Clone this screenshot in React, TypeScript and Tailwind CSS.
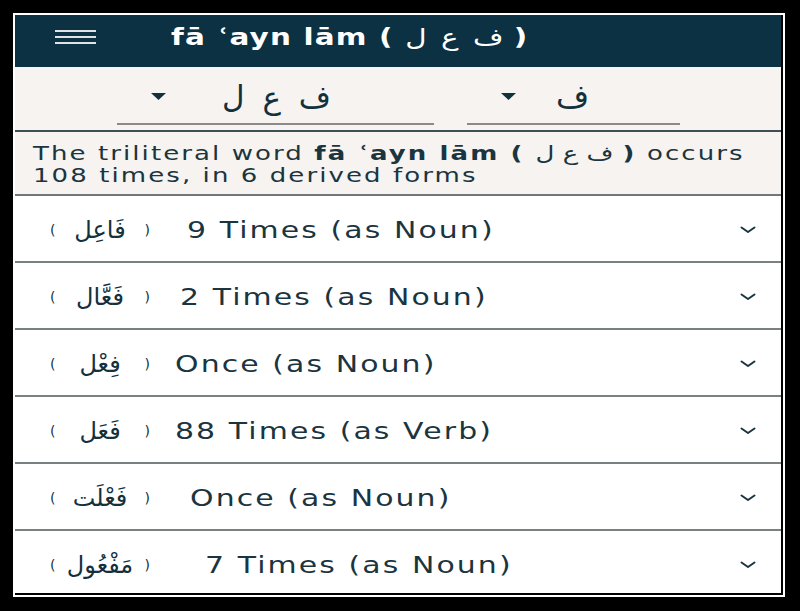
const forms = [
  { ar: "فَاعِل", label: "9 Times (as Noun)", gap: "ml-[37px]" },
  { ar: "فَعَّال", label: "2 Times (as Noun)", gap: "ml-[30px]" },
  { ar: "فِعْل", label: "Once (as Noun)", gap: "ml-[25px]" },
  { ar: "فَعَل", label: "88 Times (as Verb)", gap: "ml-[25px]" },
  { ar: "فَعْلَت", label: "Once (as Noun)", gap: "ml-[40px]" },
  { ar: "مَفْعُول", label: "7 Times (as Noun)", gap: "ml-[55px]" },
];

const arabic = { fontFamily: "'DejaVu Sans', sans-serif" };

function Caret() {
  return (
    <svg width="15" height="8" viewBox="0 0 15 8" className="shrink-0">
      <path d="M0 0 L15 0 L7.5 7 Z" fill="#13303d" />
    </svg>
  );
}

function Chevron() {
  return (
    <svg width="16" height="8" viewBox="0 0 16 8" className="ml-auto shrink-0">
      <path d="M1.5 1.5 L8 6 L14.5 1.5" fill="none" stroke="#1b3540" strokeWidth="2" strokeLinecap="round" strokeLinejoin="round" />
    </svg>
  );
}

export default function App() {
  return (
    <div className="w-[800px] h-[611px] bg-black pl-[13px] pt-[13px]" style={{ fontFamily: "'DejaVu Sans', sans-serif" }}>
      <div className="w-[772px] h-[584px] border-2 border-white">
        <div className="w-[766px] h-[578px] overflow-hidden bg-white flex flex-col text-[#1b3540]">
          <header className="h-[52px] shrink-0 bg-[#0c3142] flex items-center pb-[8px]">
            <div className="ml-[40px] flex flex-col gap-[4px] w-[41px]">
              <span className="h-[2px] bg-[#dfe3e5]" />
              <span className="h-[2px] bg-[#dfe3e5]" />
              <span className="h-[2px] bg-[#dfe3e5]" />
            </div>
            <h1 className="ml-[75px] text-white text-[23px] font-bold tracking-[0.04em] whitespace-nowrap scale-x-[1.28] origin-left">
              fā ʿayn lām ( <span dir="rtl" className="font-normal tracking-normal [word-spacing:4px]" style={arabic}>ف ع ل</span> )
            </h1>
          </header>

          <div className="h-[65px] shrink-0 bg-[#f6f3f1] border-b-2 border-[#3d4f57] flex items-end pb-[5px]">
            <div className="ml-[102px] w-[317px] h-[50px] border-b-2 border-[#8a8a8a] flex items-center pb-[4px]">
              <span className="ml-[34px]"><Caret /></span>
              <span dir="rtl" className="ml-[56px] text-[31px] leading-none [word-spacing:8px] text-[#13303d]" style={arabic}>ف ع ل</span>
            </div>
            <div className="ml-[33px] w-[213px] h-[50px] border-b-2 border-[#8a8a8a] flex items-center pb-[4px]">
              <span className="ml-[34px]"><Caret /></span>
              <span dir="rtl" className="ml-[40px] text-[32px] leading-none text-[#13303d]" style={arabic}>ف</span>
            </div>
          </div>

          <div className="h-[64px] shrink-0 bg-[#f6f3f1] border-b-2 border-[#6f777b] px-[18px] pt-[10px]">
            <p className="text-[20px] leading-[22px] tracking-[0.08em] whitespace-nowrap scale-x-[1.3] origin-left">
              The triliteral word <b>fā ʿayn lām ( <span dir="rtl" className="font-normal tracking-normal" style={arabic}>ف ع ل</span> )</b> occurs
              <br />
              108 times, in 6 derived forms
            </p>
          </div>

          {forms.map((f, i) => (
            <div key={i} className="h-[67px] shrink-0 border-b-2 border-[#7a7f82] flex items-center pt-[3px] pl-[35px] pr-[25px]">
              <span dir="rtl" className="w-[100px] text-[24px] text-[#13303d] flex justify-between items-center" style={arabic}>
                <span className="text-[14px]">(</span>
                <span>{f.ar}</span>
                <span className="text-[14px]">)</span>
              </span>
              <span className={`${f.gap} text-[23px] tracking-[0.07em] whitespace-nowrap scale-x-[1.3] origin-left`}>{f.label}</span>
              <Chevron />
            </div>
          ))}
        </div>
      </div>
    </div>
  );
}
